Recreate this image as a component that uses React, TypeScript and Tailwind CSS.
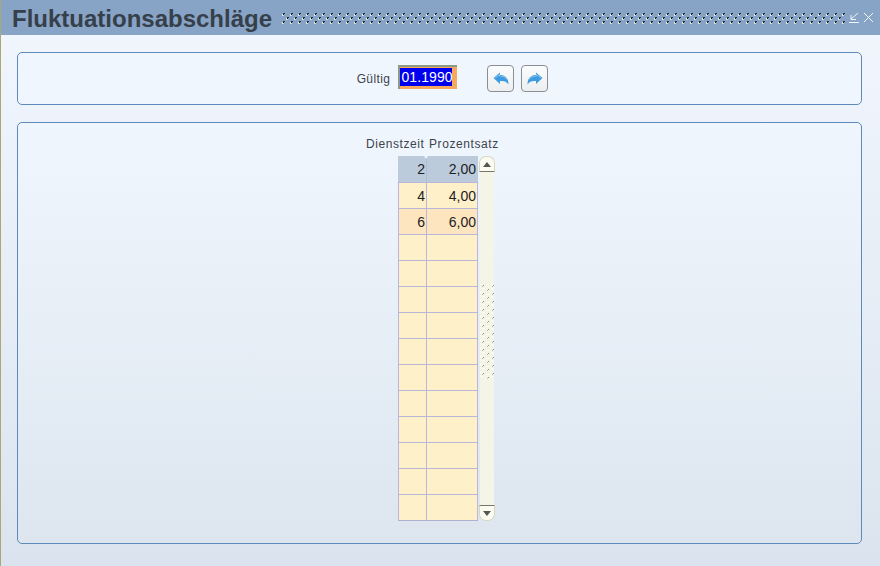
import React from 'react';

const rows = [
  { dienstzeit: '2', prozent: '2,00', bg: 'bg-[#bccbdc]' },
  { dienstzeit: '4', prozent: '4,00', bg: 'bg-[#fef0c8]' },
  { dienstzeit: '6', prozent: '6,00', bg: 'bg-[#fde6bf]' },
  ...Array.from({ length: 11 }, () => ({ dienstzeit: '', prozent: '', bg: 'bg-[#fef0c8]' })),
];

const TitleDots = () => (
  <svg width="564" height="12" className="block">
    <defs>
      <pattern id="title-dots" width="8" height="8" patternUnits="userSpaceOnUse">
        <rect x="1" y="2" width="1" height="2" fill="#e6ebd0" />
        <rect x="2" y="1" width="2" height="1" fill="#223044" />
        <rect x="2" y="2" width="1" height="1" fill="#101820" />
        <rect x="2" y="3" width="1" height="1" fill="#c3d2d8" />
        <rect x="5" y="6" width="1" height="2" fill="#e6ebd0" />
        <rect x="6" y="5" width="2" height="1" fill="#223044" />
        <rect x="6" y="6" width="1" height="1" fill="#101820" />
        <rect x="6" y="7" width="1" height="1" fill="#c3d2d8" />
      </pattern>
    </defs>
    <rect width="564" height="12" fill="url(#title-dots)" />
  </svg>
);

const GripDots = () => (
  <svg width="14" height="95" className="block">
    <defs>
      <pattern id="grip-dots" width="10" height="8" patternUnits="userSpaceOnUse">
        <rect x="0" y="0" width="1" height="1" fill="#ffffff" />
        <rect x="2" y="0" width="1" height="1" fill="#ffffff" />
        <rect x="4" y="0" width="1" height="1" fill="#ffffff" />
        <rect x="6" y="2" width="1" height="1" fill="#ffffff" />
        <rect x="8" y="2" width="1" height="1" fill="#ffffff" />
        <rect x="1" y="4" width="1" height="1" fill="#ffffff" />
        <rect x="3" y="4" width="1" height="1" fill="#ffffff" />
        <rect x="6" y="6" width="1" height="1" fill="#ffffff" />
        <rect x="8" y="6" width="1" height="1" fill="#ffffff" />
        <rect x="3" y="1" width="1" height="1" fill="#8f9378" />
        <rect x="2" y="2" width="1" height="1" fill="#b7ba9c" />
        <rect x="8" y="5" width="1" height="1" fill="#8f9378" />
        <rect x="7" y="6" width="1" height="1" fill="#b7ba9c" />
      </pattern>
    </defs>
    <rect width="14" height="95" fill="url(#grip-dots)" />
  </svg>
);

const ArrowButton = ({ flip }: { flip?: boolean }) => (
  <button className="w-[27px] h-[27px] flex items-center justify-center rounded-[4px] border border-[#8b8f93] bg-gradient-to-b from-[#fbfcfd] to-[#eceef0]">
    <svg width="16" height="13" viewBox="0 0 16 13" className={flip ? '-scale-x-100' : ''}>
      <path d="M0.5 6 L7 0.5 V3 C11.5 3 15.5 5.5 15.5 12.5 C13.5 9.5 11 8.5 7 9 V12 Z" fill="#3f9be0" />
      <path d="M2 6 L6.5 2.5 V4 C10 4 12.5 5 14 7.5" fill="none" stroke="#86c6f0" strokeWidth="1" />
    </svg>
  </button>
);

export default function App() {
  return (
    <div className="w-[880px] h-[566px] overflow-hidden flex flex-col border-l border-l-[#a9a878] bg-gradient-to-b from-[#f2f7fe] to-[#dbe4ee] font-['Liberation_Sans',sans-serif]">
      <div className="h-[35px] shrink-0 flex items-center bg-[#87a3c5] pl-[11px] pr-[3px]">
        <h1 className="mt-[2px] text-[24px] leading-[33px] font-bold text-[#36404a] whitespace-nowrap">
          Fluktuationsabschläge
        </h1>
        <div className="ml-[9px]">
          <TitleDots />
        </div>
        <svg width="12" height="12" viewBox="0 0 12 12" className="ml-[3px]">
          <path d="M10 1 L3 7 M3 3 V7.5 H8 M1 10.5 H11" stroke="#f2f5f9" strokeWidth="1" fill="none" />
        </svg>
        <svg width="11" height="11" viewBox="0 0 11 11" className="ml-[3px]">
          <path d="M1 1 L10 10 M10 1 L1 10" stroke="#f2f5f9" strokeWidth="1" fill="none" />
        </svg>
      </div>

      <div className="flex-1 flex flex-col pl-[16px] pr-[18px] pt-[17px] pb-[22px] gap-[17px]">
        <div className="h-[53px] shrink-0 rounded-[5px] border border-[#5d8abb] bg-[#f0f6fe] flex items-center justify-center">
          <div className="flex items-center ml-[26px]">
            <span className="text-[12px] text-[#3c444c] tracking-[0.4px] mr-[8px]">Gültig</span>
            <div className="w-[59px] h-[24px] bg-[#f5a85e] border-t-2 border-l-2 border-[#8d9a86] pt-[1px] mb-[3px]">
              <span className="block w-[52px] h-[18px] bg-[#0000ee] text-white text-[14px] leading-[18px] pl-[1px] tracking-[0.1px] whitespace-nowrap">
                01.1990
              </span>
            </div>
            <div className="flex gap-[7px] ml-[30px]">
              <ArrowButton />
              <ArrowButton flip />
            </div>
          </div>
        </div>

        <div className="flex-1 rounded-[5px] border border-[#5d8abb] bg-gradient-to-b from-[#f0f6fe] to-[#dde6ef] pt-[14px]">
          <div className="ml-[348px] flex text-[12px] leading-[14px] text-[#3c444c] tracking-[0.58px] whitespace-nowrap">
            <span className="w-[63px]">Dienstzeit</span>
            <span>Prozentsatz</span>
          </div>
          <div className="ml-[380px] mt-[5px] flex">
            <div className="relative w-[80px] border-b border-[#b0b0d0]">
              {rows.map((row, i) => (
                <div
                  key={i}
                  className={`h-[26px] flex border-x ${row.bg} ${i > 0 ? 'border-t border-[#b9b6da]' : 'border-[#bccbdc]'}`}
                >
                  <div
                    className={`w-[28px] border-r text-right pr-[1px] text-[14px] leading-[26px] text-[#1c2126] ${i > 0 ? 'border-[#b9b6da]' : 'border-[#aebfd4]'}`}
                  >
                    {row.dienstzeit}
                  </div>
                  <div className="flex-1 text-right pr-[1px] text-[14px] leading-[26px] text-[#1c2126]">
                    {row.prozent}
                  </div>
                </div>
              ))}
              <div className="absolute top-0 left-[26px] w-0 h-0 border-l-[2px] border-r-[2px] border-t-[3px] border-l-transparent border-r-transparent border-t-[#f0f5fb]" />
            </div>
            <div className="relative w-[16px] ml-[1px] h-[365px] flex flex-col items-center">
              <div className="absolute inset-y-[6px] left-[1px] w-[14px] bg-[#f5f5e7]" />
              <div className="relative w-[16px] h-[16px] rounded-t-[7px] border-t border-x border-[#d8d8c0] border-b border-b-[#77786a] bg-[#fbfbf2] flex items-center justify-center">
                <div className="w-0 h-0 border-l-[4px] border-r-[4px] border-b-[5px] border-l-transparent border-r-transparent border-b-[#55564c]" />
              </div>
              <div className="relative flex-1 flex flex-col justify-center w-full pl-[1px] mb-[14px]">
                <GripDots />
              </div>
              <div className="relative w-[16px] h-[16px] rounded-b-[7px] border-b border-x border-[#d8d8c0] border-t border-t-[#77786a] bg-[#fbfbf2] flex items-center justify-center">
                <div className="w-0 h-0 border-l-[4px] border-r-[4px] border-t-[5px] border-l-transparent border-r-transparent border-t-[#55564c]" />
              </div>
            </div>
          </div>
        </div>
      </div>
    </div>
  );
}
